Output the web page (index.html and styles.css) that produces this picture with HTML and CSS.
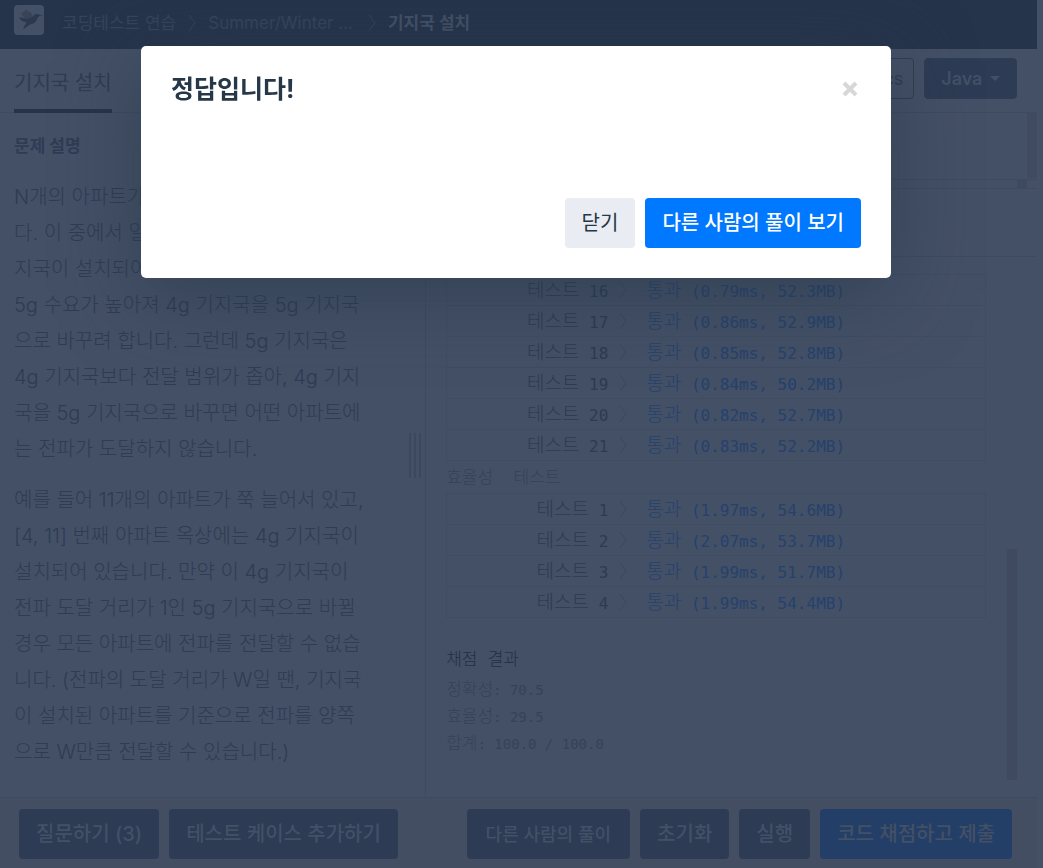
FILE: index.html
```
<!DOCTYPE html>
<html lang="ko">
<head>
    <meta charset="UTF-8">
    <meta name="viewport" content="width=device-width, initial-scale=1.0">
    <link rel="stylesheet" href="styles.css">
    <title>기지국 설치</title>
</head>
<body>
    <svg class="sprite" aria-hidden="true">
        <symbol id="chevron" viewBox="0 0 8 18"><path d="M1 1l6 8-6 8" fill="none" stroke="currentColor"/></symbol>
    </svg>
    <div class="page">
        <header class="navbar">
            <a class="logo" href="#" aria-label="홈">
                <svg viewBox="0 0 30 30" width="30" height="30">
                    <path d="M7 8q3-.5 5.500-3.500l1 2.500 2-1q3 3 4 7l-4 2q-7-2-8.500-7z" fill="#364359"/>
                    <path d="M5 12q6 2 10 1.500l4-1.500q1-3 4-3 1.500 0 2.500 1l3.500.5-4 .8q-1.500 1-2 3-1.500 4-6 5-3 1-8 5.500 1-4 3.500-7.500Q7 17 5 12z" fill="#2a3850"/>
                </svg>
            </a>
            <nav class="breadcrumb">
                <a href="#">코딩테스트 연습</a>
                <svg class="crumb-arrow"><use href="#chevron"/></svg>
                <a class="crumb-part" href="#">Summer/Winter ...</a>
                <svg class="crumb-arrow"><use href="#chevron"/></svg>
                <strong>기지국 설치</strong>
            </nav>
        </header>

        <div class="toolbar">
            <h1 class="tab">기지국 설치</h1>
            <div class="tools">
                <button class="btn-editor">sublime</button>
                <button class="btn-editor">vim</button>
                <button class="btn-editor">emacs</button>
                <button class="btn-lang">Java <span class="caret"></span></button>
            </div>
        </div>

        <main class="main">
            <section class="guide">
                <div class="guide-text">
                    <h2>문제 설명</h2>
                    <p>N개의 아파트가 일렬로 쭉 늘어서 있습니<br>다. 이 중에서 일부 아파트 옥상에는 4g 기<br>지국이 설치되어 있습니다. 기술이 발전해<br>5g 수요가 높아져 4g 기지국을 5g 기지국<br>으로 바꾸려 합니다. 그런데 5g 기지국은<br>4g 기지국보다 전달 범위가 좁아, 4g 기지<br>국을 5g 기지국으로 바꾸면 어떤 아파트에<br>는 전파가 도달하지 않습니다.</p>
                    <p>예를 들어 11개의 아파트가 쭉 늘어서 있고,<br>[4, 11] 번째 아파트 옥상에는 4g 기지국이<br>설치되어 있습니다. 만약 이 4g 기지국이<br>전파 도달 거리가 1인 5g 기지국으로 바뀔<br>경우 모든 아파트에 전파를 전달할 수 없습<br>니다. (전파의 도달 거리가 W일 땐, 기지국<br>이 설치된 아파트를 기준으로 전파를 양쪽<br>으로 W만큼 전달할 수 있습니다.)</p>
                </div>
                <div class="gutter"></div>
            </section>

            <section class="work">
                <div class="editor"><div class="editor-scroll"></div></div>
                <div class="editor-bottom"><div class="editor-thumb"></div></div>
                <div class="console-head"></div>
                <div class="console">
                    <div class="output">
                        <table class="results">
                            <tr><th><span class="ko">테스트</span> 16</th><td class="arrow"><svg><use href="#chevron"/></svg></td><td><span class="ko">통과</span> (0.79ms, 52.3MB)</td></tr>
                            <tr><th><span class="ko">테스트</span> 17</th><td class="arrow"><svg><use href="#chevron"/></svg></td><td><span class="ko">통과</span> (0.86ms, 52.9MB)</td></tr>
                            <tr><th><span class="ko">테스트</span> 18</th><td class="arrow"><svg><use href="#chevron"/></svg></td><td><span class="ko">통과</span> (0.85ms, 52.8MB)</td></tr>
                            <tr><th><span class="ko">테스트</span> 19</th><td class="arrow"><svg><use href="#chevron"/></svg></td><td><span class="ko">통과</span> (0.84ms, 50.2MB)</td></tr>
                            <tr><th><span class="ko">테스트</span> 20</th><td class="arrow"><svg><use href="#chevron"/></svg></td><td><span class="ko">통과</span> (0.82ms, 52.7MB)</td></tr>
                            <tr><th><span class="ko">테스트</span> 21</th><td class="arrow"><svg><use href="#chevron"/></svg></td><td><span class="ko">통과</span> (0.83ms, 52.2MB)</td></tr>
                        </table>
                        <h3 class="group">효율성&nbsp; 테스트</h3>
                        <table class="results">
                            <tr><th><span class="ko">테스트</span> 1</th><td class="arrow"><svg><use href="#chevron"/></svg></td><td><span class="ko">통과</span> (1.97ms, 54.6MB)</td></tr>
                            <tr><th><span class="ko">테스트</span> 2</th><td class="arrow"><svg><use href="#chevron"/></svg></td><td><span class="ko">통과</span> (2.07ms, 53.7MB)</td></tr>
                            <tr><th><span class="ko">테스트</span> 3</th><td class="arrow"><svg><use href="#chevron"/></svg></td><td><span class="ko">통과</span> (1.99ms, 51.7MB)</td></tr>
                            <tr><th><span class="ko">테스트</span> 4</th><td class="arrow"><svg><use href="#chevron"/></svg></td><td><span class="ko">통과</span> (1.99ms, 54.4MB)</td></tr>
                        </table>
                        <h3 class="score-title">채점 결과</h3>
                        <div class="score"><span class="ko">정확성</span>: 70.5</div>
                        <div class="score"><span class="ko">효율성</span>: 29.5</div>
                        <div class="score"><span class="ko">합계</span>: 100.0 / 100.0</div>
                    </div>
                    <div class="console-thumb"></div>
                </div>
            </section>
        </main>

        <footer class="footer">
            <button class="btn">질문하기 (3)</button>
            <button class="btn">테스트 케이스 추가하기</button>
            <button class="btn btn-others">다른 사람의 풀이</button>
            <button class="btn">초기화</button>
            <button class="btn">실행</button>
            <button class="btn btn-submit">코드 채점하고 제출</button>
        </footer>
    </div>

    <div class="modal-wrap">
        <div class="modal" role="dialog" aria-labelledby="modalTitle">
            <div class="modal-header">
                <h2 id="modalTitle">정답입니다!</h2>
                <button class="close" aria-label="닫기">
                    <svg viewBox="0 0 16 16" width="16" height="16"><path d="M2 2l12 12M14 2L2 14" stroke="#d7d7d7" stroke-width="4"/></svg>
                </button>
            </div>
            <div class="modal-footer">
                <button class="btn btn-light">닫기</button>
                <button class="btn btn-primary">다른 사람의 풀이 보기</button>
            </div>
        </div>
    </div>
</body>
</html>
```
FILE: styles.css
```
* {
    box-sizing: border-box;
}

body {
    margin: 0;
    background-color: #445066;
    color: #2e3c54;
    font-family: Inter, "Noto Sans CJK KR", sans-serif;
    font-size: 20px;
    overflow: hidden;
}

h1, h2, h3, p {
    margin: 0;
}

a {
    color: inherit;
    text-decoration: none;
}

button {
    font-family: inherit;
    border: none;
    cursor: pointer;
}

.sprite {
    display: none;
}

.page {
    display: flex;
    flex-direction: column;
    height: 100vh;
    margin-right: 6px;
}

/* top bar */
.navbar {
    display: flex;
    align-items: center;
    gap: 18px;
    height: 49px;
    padding: 0 14px 9px;
    background-color: #26344b;
}

.logo {
    width: 30px;
    height: 30px;
    border-radius: 4px;
    background-color: #445066;
}

.breadcrumb {
    display: flex;
    align-items: center;
    gap: 12px;
    padding-top: 6px;
    font-size: 17px;
    line-height: 24px;
    color: #36445c;
}

.crumb-part {
    padding-right: 3px;
}

.breadcrumb strong {
    color: #445066;
}

.crumb-arrow {
    width: 8px;
    height: 18px;
}

.toolbar {
    display: flex;
    justify-content: space-between;
    height: 64px;
    padding: 0 20px 0 14px;
    border-bottom: 1px solid #3e4a60;
}

.tab {
    height: 64px;
    padding-top: 4px;
    font-size: 20px;
    font-weight: 400;
    line-height: 60px;
    border-bottom: 4px solid #26344b;
}

.tools {
    display: flex;
    gap: 10px;
    padding-top: 9px;
}

.btn-editor, .btn-lang {
    height: 41px;
    padding: 0 10px;
    border: 1px solid #2e3c54;
    border-radius: 4px;
    background: none;
    color: #2e3c54;
    font-size: 18px;
}

.btn-lang {
    padding: 0 16px;
    background-color: #2d3b54;
    color: #445066;
    font-weight: 600;
}

.caret {
    display: inline-block;
    margin-left: 3px;
    border: 5px solid transparent;
    border-top-color: #445066;
    border-bottom: 0;
    vertical-align: 4px;
}

/* panels */
.main {
    display: flex;
    flex: 1;
    min-height: 0;
}

.guide {
    display: flex;
    align-items: center;
    justify-content: space-between;
    width: calc(41% + 1px);
    padding-right: 4px;
    border-right: 1px solid #3e4a60;
}

.guide-text {
    align-self: flex-start;
    padding: 16px 0 0 14px;
    white-space: nowrap;
}

.guide-text h2 {
    margin-bottom: 16px;
    font-size: 17px;
    line-height: 34px;
}

.guide-text p {
    margin-bottom: 15px;
    font-size: 20px;
    font-weight: 300;
    line-height: 36px;
}

.gutter {
    width: 12px;
    height: 45px;
    background: repeating-linear-gradient(to right, #3c485f 0 2px, transparent 2px 5px);
}

.work {
    display: flex;
    flex-direction: column;
    flex: 1;
    min-width: 0;
}

.editor {
    display: flex;
    justify-content: flex-end;
    height: 67px;
    border-bottom: 1px solid #3e4a60;
}

.editor-scroll {
    width: 10px;
    height: 65px;
    background-color: #404b61;
}

.editor-bottom {
    display: flex;
    justify-content: flex-end;
    height: 9px;
    padding-right: 10px;
    border-bottom: 1px solid #3e4a60;
}

.editor-thumb {
    width: 10px;
    background-color: #3f4a60;
}

.console-head {
    height: 68px;
    border-bottom: 1px solid #3e4a60;
}

.console {
    display: flex;
    align-items: flex-end;
    justify-content: space-between;
    flex: 1;
    min-height: 0;
    padding: 17px 20px;
}

.output {
    align-self: flex-start;
    flex: 1;
    margin-right: 21px;
    font-family: "DejaVu Sans Mono", "Noto Sans CJK KR", monospace;
    font-size: 16px;
}

.console-thumb {
    width: 10px;
    height: 231px;
    border-radius: 2px;
    background-color: #3f4a60;
}

.results {
    width: 100%;
    border-collapse: collapse;
    border: 1px solid #404c62;
}

.results tr {
    height: 31px;
    border-bottom: 1px solid #404c62;
}

.results th, .results td {
    padding: 0;
    line-height: 20px;
    font-weight: 400;
    text-align: left;
    color: #25426d;
}

.results th {
    width: 30%;
    text-align: right;
    color: #2e3b51;
}

.results .ko {
    font-family: "Noto Sans CJK KR", sans-serif;
    font-size: 19px;
    font-weight: 300;
}

.results .arrow {
    width: 38px;
    padding-left: 11px;
    color: #3a475e;
}

.arrow svg {
    display: block;
    width: 8px;
    height: 18px;
}

.score {
    font-size: 14px;
    line-height: 27px;
    color: #34435a;
}

.score .ko {
    font-size: 17px;
    font-weight: 300;
    line-height: 20px;
}

.group, .score-title {
    font-size: 17px;
    font-weight: 300;
    line-height: 32px;
    color: #34435a;
}

.score-title {
    margin-top: 23px;
    line-height: 36px;
    color: #222f47;
}

/* bottom bar */
.footer {
    display: flex;
    gap: 10px;
    height: 71px;
    padding: 11px 25px 9px 19px;
    border-top: 1px solid #3e4a60;
    background-color: #434e63;
}

.btn {
    height: 50px;
    padding: 0 17px 3px;
    border-radius: 4px;
    background-color: #2d3b54;
    color: #445066;
    font-size: 20px;
    font-weight: 500;
    white-space: nowrap;
}

.btn-others {
    margin-left: auto;
    padding: 0 19px 3px;
    font-size: 18px;
}

.btn-submit {
    background-color: #233f67;
}

/* result dialog */
.modal-wrap {
    position: fixed;
    inset: 0;
    padding: 46px 11px 0 0;
}

.modal {
    max-width: 750px;
    margin: 0 auto;
    padding: 25px 30px 30px;
    border-radius: 5px;
    background-color: #fff;
    color: #263747;
    box-shadow: 0 15px 80px rgba(38, 55, 71, 0.6);
}

.modal-header {
    display: flex;
    align-items: center;
    justify-content: space-between;
    margin-bottom: 91px;
}

.modal-header h2 {
    font-size: 25px;
    font-weight: 700;
    line-height: 36px;
}

.close {
    display: flex;
    padding: 3px;
    background: none;
}

.modal-footer {
    display: flex;
    justify-content: flex-end;
    gap: 10px;
}

.btn-light {
    background-color: #e9ecf3;
    color: #263747;
    font-weight: 400;
}

.btn-primary {
    background-color: #0078ff;
    color: #fff;
}
```
